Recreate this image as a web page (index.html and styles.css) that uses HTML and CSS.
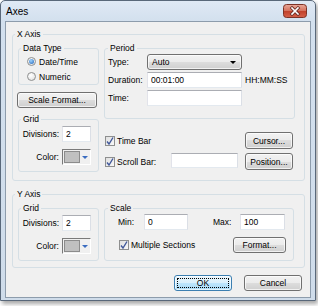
FILE: index.html
```html
<!DOCTYPE html>
<html lang="en">

<head>
    <meta charset="UTF-8">
    <meta name="viewport" content="width=device-width, initial-scale=1.0">
    <title>Axes</title>
    <link rel="stylesheet" href="styles.css">
</head>

<body>

    <div class="window">
        <div class="titlebar">
            <span class="title">Axes</span>
            <a class="close" href="#">
                <svg width="24" height="14" viewBox="0 0 24 14">
                    <defs>
                        <linearGradient id="red" x1="0" y1="0" x2="0" y2="1">
                            <stop offset="0" stop-color="#e9a99b" />
                            <stop offset="0.5" stop-color="#d4705c" />
                            <stop offset="0.5" stop-color="#c0402a" />
                            <stop offset="1" stop-color="#d6614a" />
                        </linearGradient>
                    </defs>
                    <rect x="0.5" y="0.5" width="23" height="13" rx="3" fill="url(#red)" stroke="#7d3226" />
                    <path d="M9 4 L15 10 M15 4 L9 10" stroke="#6b2d25" stroke-width="3.2" stroke-linecap="square" />
                    <path d="M9 4 L15 10 M15 4 L9 10" stroke="#ffffff" stroke-width="1.6" stroke-linecap="square" />
                </svg>
            </a>
        </div>

        <div class="client">

            <!-- X Axis -->
            <fieldset class="axis">
                <legend>X Axis</legend>
                <div class="axis-body">
                    <div class="col-left">
                        <fieldset class="group data-type">
                            <legend>Data Type</legend>
                            <label class="radio"><span class="dot checked"></span>Date/Time</label>
                            <label class="radio"><span class="dot"></span>Numeric</label>
                        </fieldset>
                        <button class="btn scale-format">Scale Format...</button>
                        <fieldset class="group grid-box">
                            <legend>Grid</legend>
                            <div class="grid-rows">
                                <span class="lbl">Divisions:</span>
                                <input class="text" type="text" value="2">
                                <span class="lbl">Color:</span>
                                <div class="color-pick"><span class="swatch"></span><span class="arrow"></span></div>
                            </div>
                        </fieldset>
                    </div>

                    <div class="col-right">
                        <fieldset class="group period">
                            <legend>Period</legend>
                            <div class="period-rows">
                                <span>Type:</span>
                                <div class="combo">Auto<span class="combo-arrow"></span></div>
                                <span></span>
                                <span>Duration:</span>
                                <input class="text" type="text" value="00:01:00">
                                <span class="unit">HH:MM:SS</span>
                                <span>Time:</span>
                                <input class="text" type="text" value="">
                                <span></span>
                            </div>
                        </fieldset>

                        <div class="bars">
                            <label class="check"><span class="box"><svg width="8" height="8" viewBox="0 0 8 8"><path d="M1 4.5 L3 7 L7 0.5" fill="none" stroke="#41589a" stroke-width="1.4" /></svg></span>Time Bar</label>
                            <span></span>
                            <button class="btn tall">Cursor...</button>
                            <label class="check"><span class="box"><svg width="8" height="8" viewBox="0 0 8 8"><path d="M1 4.5 L3 7 L7 0.5" fill="none" stroke="#41589a" stroke-width="1.4" /></svg></span>Scroll Bar:</label>
                            <input class="text scroll-input" type="text" value="">
                            <button class="btn tall">Position...</button>
                        </div>
                    </div>
                </div>
            </fieldset>

            <!-- Y Axis -->
            <fieldset class="axis y-axis">
                <legend>Y Axis</legend>
                <div class="axis-body">
                    <div class="col-left">
                        <fieldset class="group grid-box">
                            <legend>Grid</legend>
                            <div class="grid-rows">
                                <span class="lbl">Divisions:</span>
                                <input class="text" type="text" value="2">
                                <span class="lbl">Color:</span>
                                <div class="color-pick"><span class="swatch"></span><span class="arrow"></span></div>
                            </div>
                        </fieldset>
                    </div>

                    <fieldset class="group scale">
                        <legend>Scale</legend>
                        <div class="scale-body">
                            <div class="scale-row">
                                <span class="min-lbl">Min:</span>
                                <input class="text min" type="text" value="0">
                                <span class="max-lbl">Max:</span>
                                <input class="text max" type="text" value="100">
                            </div>
                            <div class="scale-row second">
                                <label class="check"><span class="box"><svg width="8" height="8" viewBox="0 0 8 8"><path d="M1 4.5 L3 7 L7 0.5" fill="none" stroke="#41589a" stroke-width="1.4" /></svg></span>Multiple Sections</label>
                                <button class="btn format">Format...</button>
                            </div>
                        </div>
                    </fieldset>
                </div>
            </fieldset>

            <div class="footer">
                <button class="btn ok">OK</button>
                <button class="btn">Cancel</button>
            </div>
        </div>
    </div>

</body>

</html>
```

FILE: styles.css
```css
* {
    margin: 0;
    padding: 0;
    box-sizing: border-box;
}

body {
    width: 318px;
    height: 306px;
    background: #fff;
    font-family: "Liberation Sans", Arial, sans-serif;
    font-size: 8.5px;
    color: #000;
}

/* 窗口外框 */
.window {
    width: 316px;
    height: 301px;
    border: 1px solid #59687a;
    border-radius: 5px 5px 0 0;
    padding: 0 4px 2px;
    background: linear-gradient(#dfe9f5, #d3e0ee 20px, #cfdcea);
    box-shadow: 2px 3px 4px rgba(0, 0, 0, 0.35);
}

.titlebar {
    height: 20px;
    display: flex;
    align-items: center;
    justify-content: space-between;
    padding-left: 1px;
}

.title {
    font-size: 10px;
}

.close {
    display: block;
    width: 24px;
    height: 14px;
    margin-right: 4px;
}

.close svg {
    display: block;
}

.client {
    height: 277px;
    border: 1px solid #8d9cac;
    background: #f0f0f0;
    padding: 7px 5px 0 6px;
}

/* 分组框 */
fieldset {
    border: 1px solid #d5dfe5;
    border-radius: 3px;
}

legend {
    line-height: 11px;
    padding: 0 2px;
}

.axis {
    width: 293px;
    padding: 3px 9px 8px 5px;
}

.axis > legend {
    margin-left: -3px;
}

.y-axis {
    margin-top: 8px;
    padding-bottom: 6px;
}

.axis-body {
    display: flex;
    gap: 5px;
}

.col-left {
    width: 81px;
    display: flex;
    flex-direction: column;
}

.col-right {
    width: 191px;
}

/* Data Type */
.data-type {
    padding: 0 0 0 8px;
}

.data-type legend {
    margin-left: -6px;
}

.radio {
    height: 15px;
    display: flex;
    align-items: center;
    gap: 3px;
}

.dot {
    width: 9px;
    height: 9px;
    border: 1px solid #8e8f8f;
    border-radius: 50%;
    background: radial-gradient(circle at 40% 35%, #fff, #dcdcdc);
    display: flex;
    align-items: center;
    justify-content: center;
}

.dot.checked::after {
    content: "";
    width: 5px;
    height: 5px;
    border-radius: 50%;
    background: radial-gradient(circle at 40% 35%, #9fd4ff, #1d60b8);
}

/* 按钮 */
.btn {
    font: inherit;
    color: #000;
    height: 16px;
    border: 1px solid #707070;
    border-radius: 3px;
    background: linear-gradient(#f2f2f2, #ebebeb 50%, #dddddd 50%, #cfcfcf);
    box-shadow: inset 0 0 0 1px rgba(255, 255, 255, 0.7);
}

.btn.tall {
    height: 17px;
}

.scale-format {
    width: 80px;
    margin: 7px 0 0 -1px;
}

/* Grid */
.grid-box {
    margin-top: 6px;
    padding: 1px 0 6px 2px;
}

.y-axis .grid-box {
    margin-top: 0;
}

.grid-rows {
    display: grid;
    grid-template-columns: 38px 29px;
    grid-auto-rows: 16px;
    column-gap: 3px;
    row-gap: 7px;
    align-items: center;
}

.lbl {
    text-align: right;
}

.text {
    font: inherit;
    color: #000;
    height: 16px;
    border: 1px solid;
    border-color: #abadb3 #dbdfe6 #e3e9ef #e2e3ea;
    background: #fff;
    padding: 0 3px;
    outline: none;
    width: 100%;
}

.color-pick {
    height: 16px;
    border: 1px solid;
    border-color: #7a7a7a #fff #fff #7a7a7a;
    display: flex;
    align-items: center;
    padding-left: 1px;
    gap: 2px;
}

.swatch {
    width: 16px;
    height: 12px;
    background: #c0c0c0;
    border: 1px solid #8c8c8c;
}

.arrow {
    width: 0;
    height: 0;
    border-left: 3px solid transparent;
    border-right: 3px solid transparent;
    border-top: 3px solid #3a6cc0;
}

/* Period */
.period {
    padding: 0 0 12px 3px;
}

.period-rows {
    display: grid;
    grid-template-columns: 39px 95px auto;
    grid-auto-rows: 16px;
    row-gap: 2px;
    align-items: center;
}

.combo {
    height: 16px;
    border: 1px solid #707070;
    border-radius: 3px;
    background: linear-gradient(#f2f2f2, #ebebeb 50%, #dddddd 50%, #cfcfcf);
    box-shadow: inset 0 0 0 1px rgba(255, 255, 255, 0.7);
    display: flex;
    align-items: center;
    justify-content: space-between;
    padding: 0 5px 0 4px;
}

.combo-arrow {
    width: 0;
    height: 0;
    border-left: 3px solid transparent;
    border-right: 3px solid transparent;
    border-top: 3px solid #000;
}

.unit {
    padding-left: 3px;
}

/* 复选框 */
.bars {
    margin-top: 13px;
    display: grid;
    grid-template-columns: 67px 74px 48px;
    grid-auto-rows: 17px;
    row-gap: 4px;
    align-items: center;
}

.check {
    display: flex;
    align-items: center;
    gap: 2px;
    padding-left: 1px;
    white-space: nowrap;
}

.box {
    width: 10px;
    height: 10px;
    border: 1px solid #8e8f8f;
    background: linear-gradient(135deg, #e0e0e0, #f8f8f8);
    display: flex;
    align-items: center;
    justify-content: center;
}

.box svg {
    display: block;
}

.scroll-input {
    width: 67px;
    height: 15px;
    align-self: start;
}

/* Scale */
.scale {
    width: 190px;
    padding: 0 7px 7px 3px;
}

.scale-body {
    padding-left: 10px;
}

.scale-row {
    display: flex;
    align-items: center;
    height: 16px;
}

.scale-row.second {
    margin-top: 7px;
    justify-content: space-between;
}

.min-lbl {
    width: 26px;
}

.text.min {
    width: 44px;
}

.max-lbl {
    width: 27px;
    margin-left: 25px;
}

.text.max {
    width: 45px;
}

.format {
    width: 53px;
}

/* 底部按钮 */
.footer {
    margin: 7px 3px 0 0;
    display: flex;
    justify-content: flex-end;
    gap: 12px;
}

.footer .btn {
    width: 58px;
}

.btn.ok {
    border-color: #3c7fb1;
    background: linear-gradient(#eaf6fd, #d9f0fc 50%, #bee6fd 50%, #a7d9f5);
    outline: 1px dotted #000;
    outline-offset: -4px;
}
```
